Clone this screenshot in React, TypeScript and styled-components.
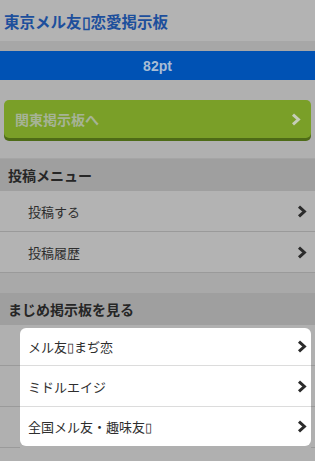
import React from "react";
import styled, { createGlobalStyle, css } from "styled-components";

const GlobalStyle = createGlobalStyle`
  html, body {
    margin: 0;
    padding: 0;
    background: #b0b0b0;
  }
  body {
    font-family: "Noto Sans CJK JP", "Liberation Sans", sans-serif;
  }
`;

const Page = styled.div`
  width: 315px;
  min-height: 461px;
  background: #b0b0b0;
  overflow: hidden;
`;

const Header = styled.header`
  height: 41px;
  display: flex;
  align-items: center;
  padding: 0 4px;
  background: #b3b3b3;
  border-bottom: 10px solid #a7a7a7;
`;

const Title = styled.h1`
  margin: 0;
  font-size: 15.5px;
  font-weight: 700;
  color: #1d4f9c;
`;

const PointBar = styled.div`
  height: 29px;
  background: #0052b4;
  display: flex;
  align-items: center;
  justify-content: center;
  font-family: "Liberation Sans", sans-serif;
  font-weight: 700;
  font-size: 14px;
  color: #a8bdd4;
`;

const ButtonArea = styled.div`
  padding: 20px 4px 20px;
  border-bottom: 1px solid #a5a5a5;
`;

const GreenButton = styled.a`
  display: flex;
  align-items: center;
  justify-content: space-between;
  height: 38px;
  padding: 0 10px 0 11px;
  background: #7a9f28;
  border-radius: 5px;
  box-shadow: 0 3px 0 #4e6b17;
  color: #a6b396;
  font-size: 14px;
  font-weight: 700;
  text-decoration: none;
`;

const SectionHead = styled.div`
  height: 32px;
  display: flex;
  align-items: center;
  padding: 0 8px;
  background: #9f9f9f;
  color: #262626;
  font-size: 14px;
  font-weight: 700;
`;

const List = styled.ul`
  list-style: none;
  margin: 0;
  padding: 0;
`;

const Row = styled.li`
  height: 40px;
  display: flex;
  align-items: center;
  justify-content: space-between;
  padding: 0 8px 0 28px;
  background: #b3b3b3;
  border-bottom: 1px solid #9a9a9a;
  color: #2e2e2e;
  font-size: 13px;
`;

const Spacer = styled.div`
  height: 20px;
  background: #a9a9a9;
`;

const HiRow = styled.li`
  height: 41px;
  display: flex;
  background: #b0b0b0;
`;

const Side = styled.div<{ $w: number }>`
  width: ${(p) => p.$w}px;
  flex-shrink: 0;
  box-sizing: border-box;
  border-bottom: 1px solid #9a9a9a;
`;

const Cell = styled.div<{ $pos: "first" | "mid" | "last" }>`
  flex: 1;
  display: flex;
  align-items: center;
  justify-content: space-between;
  padding: 0 4px 0 8px;
  background: #ffffff;
  color: #2e2e2e;
  font-size: 13px;
  border-bottom: 1px solid #dcdcdc;
  ${(p) =>
    p.$pos === "first" &&
    css`
      margin-top: 3px;
      border-radius: 6px 6px 0 0;
    `}
  ${(p) =>
    p.$pos === "last" &&
    css`
      margin-bottom: 2px;
      border-bottom: none;
      border-radius: 0 0 6px 6px;
    `}
`;

const ChevronSvg = styled.svg<{ $light?: boolean }>`
  width: 10px;
  height: 13px;
  flex-shrink: 0;
  color: ${(p) => (p.$light ? "#c6cdb8" : "#2b2b2b")};
`;

const Chevron = ({ light }: { light?: boolean }) => (
  <ChevronSvg $light={light} viewBox="0 0 10 13">
    <path
      d="M2 1.6 L7.4 6.5 L2 11.4"
      fill="none"
      stroke="currentColor"
      strokeWidth="3"
      strokeLinejoin="miter"
    />
  </ChevronSvg>
);

const postMenu = ["投稿する", "投稿履歴"];
const boards = ["メル友▯まぢ恋", "ミドルエイジ", "全国メル友・趣味友▯"];

export default function App() {
  return (
    <Page>
      <GlobalStyle />
      <Header>
        <Title>東京メル友▯恋愛掲示板</Title>
      </Header>
      <PointBar>82pt</PointBar>
      <ButtonArea>
        <GreenButton href="#">
          関東掲示板へ
          <Chevron light />
        </GreenButton>
      </ButtonArea>

      <SectionHead>投稿メニュー</SectionHead>
      <List>
        {postMenu.map((m) => (
          <Row key={m}>
            {m}
            <Chevron />
          </Row>
        ))}
      </List>
      <Spacer />

      <SectionHead>まじめ掲示板を見る</SectionHead>
      <List>
        {boards.map((b, i) => (
          <HiRow key={b}>
            <Side $w={20} />
            <Cell $pos={i === 0 ? "first" : i === boards.length - 1 ? "last" : "mid"}>
              {b}
              <Chevron />
            </Cell>
            <Side $w={4} />
          </HiRow>
        ))}
      </List>
    </Page>
  );
}
